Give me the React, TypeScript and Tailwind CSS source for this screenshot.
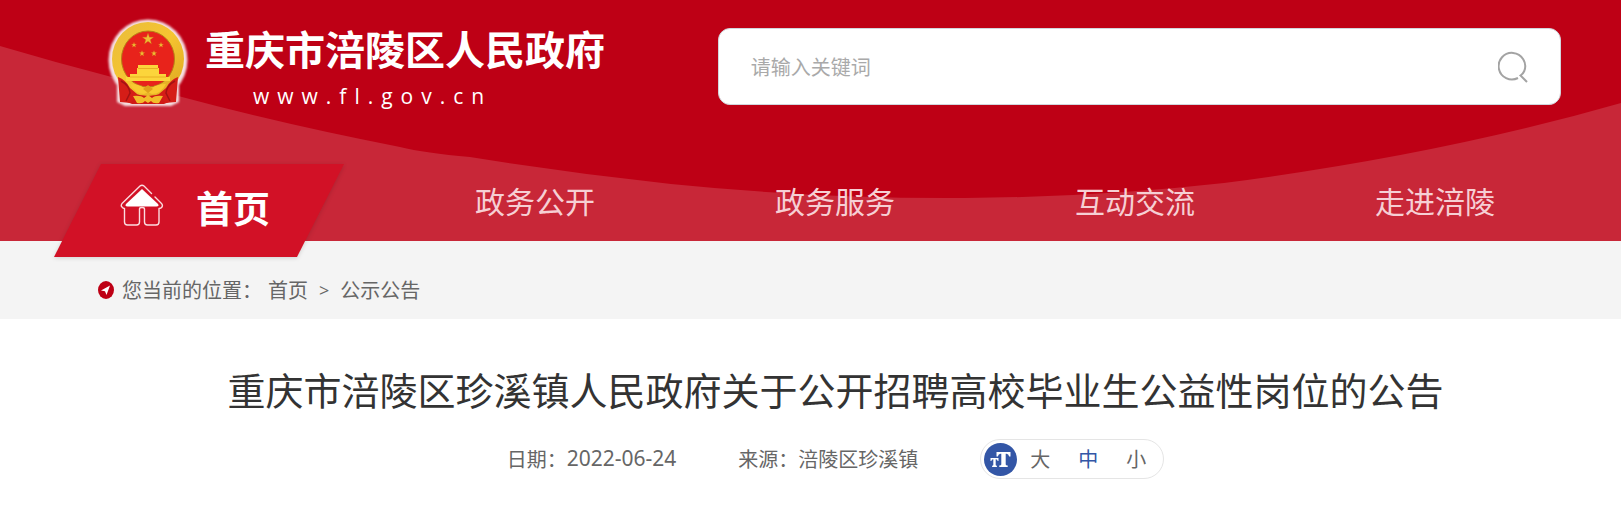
import React, { useState } from "react";

interface NavItem {
  label: string;
  href: string;
}

const navItems: NavItem[] = [
  { label: "政务公开", href: "#open" },
  { label: "政务服务", href: "#service" },
  { label: "互动交流", href: "#interact" },
  { label: "走进涪陵", href: "#about" },
];

const fontSizes = ["大", "中", "小"];

const STAR = "0,-10 2.4,-3.1 9.5,-3.1 3.8,1.2 5.9,8.1 0,3.9 -5.9,8.1 -3.8,1.2 -9.5,-3.1 -2.4,-3.1";

const Emblem: React.FC = () => (
  <svg viewBox="0 0 82 90" className="h-[90px] w-[82px] shrink-0 overflow-visible" aria-hidden="true">
    <defs>
      <filter id="glow" x="-20%" y="-20%" width="140%" height="140%">
        <feGaussianBlur stdDeviation="1.2" />
      </filter>
      <linearGradient id="gold" x1="0" y1="0" x2="1" y2="1">
        <stop offset="0" stopColor="#e8bc3c" />
        <stop offset="0.5" stopColor="#f6c531" />
        <stop offset="1" stopColor="#dba51f" />
      </linearGradient>
    </defs>
    {/* pale halo */}
    <g fill="#f6dfe1" filter="url(#glow)">
      <ellipse cx="41" cy="42" rx="39.5" ry="40.5" />
      <path d="M10 56h62v28l-8 4H18l-8-4z" />
    </g>
    {/* ribbons */}
    <path d="M14 58l-1 25 7 1 5 2h32l5-2 7-1-1-25z" fill="#d01a16" />
    <ellipse cx="41" cy="41" rx="36" ry="37" fill="url(#gold)" />
    <ellipse cx="41" cy="41" rx="26.5" ry="28" fill="#e8231b" stroke="#b78016" strokeWidth="1" />
    {/* ribbon over the lower ring */}
    <path d="M11 59q8 3 12 11l7 6-6 9-11-1zM71 59q-8 3-12 11l-7 6 6 9 11-1z" fill="#d51d17" />
    <path d="M14 63q8 4 9 12l-4 8M68 63q-8 4-9 12l4 8" fill="none" stroke="#a31213" strokeWidth="1.500" />
    <g fill="#eebd35" stroke="#c88d17" strokeWidth="0.5">
      <polygon points={STAR} transform="translate(41 21) scale(.58)" />
      <polygon points={STAR} transform="translate(27 27) scale(.28)" />
      <polygon points={STAR} transform="translate(54 27) scale(.28)" />
      <polygon points={STAR} transform="translate(35 35.500) scale(.3)" />
      <polygon points={STAR} transform="translate(47 35.500) scale(.3)" />
    </g>
    {/* gate */}
    <path d="M31 47h20v3h1v6h7v3h4v4H19v-4h4v-3h7v-6h1z" fill="#fcd53b" />
    <path d="M31 50.500h20M23 59h36" stroke="#e9ae22" strokeWidth="1" />
    {/* cog and knot */}
    <path d="M23 66q9 0 14 4l4-2 4 2q5-4 14-4-5 10-14 10l-4-2-4 2q-9 0-14-10z" fill="#f9c930" />
    <path d="M36 71l5-4 5 4-5 4z" fill="#e0a01c" />
    <path d="M26 78q8-1 11 2l4-3 4 3q3-3 11-2l-4 7q-6 1-8-2l-3 2-3-2q-2 3-8 2z" fill="#f2bd2b" />
  </svg>
);

const HomeIcon: React.FC = () => (
  <svg viewBox="0 0 44 42" className="h-[42px] w-11 shrink-0" fill="none" aria-hidden="true">
    <path d="M22 5L38 20q1.500 2.500-1.500 2.500h-29Q4.500 22.500 6 20z" fill="#fff" />
    <g stroke="#fbdcdf" strokeWidth="1.400" strokeLinecap="round" strokeLinejoin="round">
      <path d="M31.500 9.500L24 2q-2-1.700-4 0L2 19.500q-1.500 2.500 0 3.500 1 1.500 2.500 1.500V38q0 3 3 3h9q3 0 3-3V25q0-1.500 2.500-1.500t2.500 1.500v13q0 3 3 3H36q3 0 3-3V24.500q2 0 3-1.500 1-2-.5-3.500L35 13" />
    </g>
  </svg>
);

const SearchIcon: React.FC = () => (
  <svg viewBox="0 0 30 32" className="h-8 w-[30px]" fill="none" stroke="#a3a3a3" strokeWidth="2" aria-hidden="true">
    <path d="M20 27A13.300 13.300 0 1 1 26.300 20Q25 23 22.500 24.500L29 31" />
  </svg>
);

const Header: React.FC = () => (
  <header className="relative bg-[#be0015]">
    <svg
      viewBox="0 0 1621 241"
      preserveAspectRatio="none"
      className="absolute inset-0 h-full w-full"
      aria-hidden="true"
    >
      <path
        d="M0 46Q54 62 108 76Q245 117 400 147Q425 153 470 157Q570 173 671 184Q820 199 965 198Q1100 197 1224 183Q1440 155 1621 103V241H0z"
        fill="#c82738"
      />
    </svg>

    <div className="relative flex items-start justify-between pr-[60px] pl-[107px]">
      <a href="#home" className="flex items-start gap-4 pt-[18px] text-white">
        <Emblem />
        <span className="flex flex-col">
          <span className="text-[40px] leading-[60px] font-bold whitespace-nowrap">重庆市涪陵区人民政府</span>
          <span className="mt-1 pl-12 font-['Open_Sans','Noto_Sans',sans-serif] text-[21px] leading-7 tracking-[8px]">
            www.fl.gov.cn
          </span>
        </span>
      </a>

      <form
        onSubmit={(e) => e.preventDefault()}
        className="mt-7 flex h-[77px] w-[58%] items-center rounded-xl border border-gray-300 bg-white pr-8 pl-8"
      >
        <input
          type="text"
          aria-label="搜索"
          placeholder="请输入关键词"
          className="h-full flex-1 bg-transparent text-[20px] text-gray-700 outline-none placeholder:text-[#a9a9a9]"
        />
        <button type="submit" aria-label="搜索">
          <SearchIcon />
        </button>
      </form>
    </div>

    <nav className="relative mt-[50px] grid grid-cols-5 pr-9 pl-[85px]">
      <div className="relative h-[81px]">
        <a href="#home" className="absolute top-1 -left-8 flex h-[94px] w-[292px] text-white">
          <svg
            viewBox="0 0 292 94"
            className="absolute inset-0 h-full w-full overflow-visible drop-shadow-sm"
            aria-hidden="true"
          >
            <path d="M48 0H291L244 93H1z" fill="#d21126" />
          </svg>
          <span className="relative flex items-start gap-8 pt-5 pl-[67px]">
            <HomeIcon />
            <span className="text-[37px] leading-[46px] font-bold">首页</span>
          </span>
        </a>
      </div>
      {navItems.map((item) => (
        <a
          key={item.label}
          href={item.href}
          className="flex h-[81px] items-center justify-center text-[30px] text-[#f6cfd4]"
        >
          {item.label}
        </a>
      ))}
    </nav>
  </header>
);

const Breadcrumb: React.FC = () => (
  <nav className="flex h-[78px] items-center bg-[#f4f4f4] pt-5 pl-[98px] text-[20px] text-[#666]">
    <svg viewBox="0 0 16 18" className="mr-2 h-[18px] w-4" aria-hidden="true">
      <ellipse cx="8" cy="9" rx="8" ry="9" fill="#be0015" />
      <path d="M12 4.500L3 9.500l4 .7L8.500 14z" fill="#fff" />
    </svg>
    <span className="mr-1.5">您当前的位置：</span>
    <a href="#home">首页</a>
    <span className="mx-[11px] font-['Open_Sans',sans-serif] text-lg">&gt;</span>
    <a href="#notice">公示公告</a>
  </nav>
);

export default function App() {
  const [size, setSize] = useState("中");

  return (
    <div className="min-h-screen bg-white font-['Noto_Sans_CJK_SC',sans-serif]">
      <Header />
      <Breadcrumb />
      <main className="pt-[42px] pl-[50px]">
        <h1 className="text-center text-[38px] leading-[56px] text-[#333]">
          重庆市涪陵区珍溪镇人民政府关于公开招聘高校毕业生公益性岗位的公告
        </h1>
        <div className="mt-[22px] flex items-center justify-center gap-[62px] text-[20px] text-[#666]">
          <span className="flex items-center">
            日期：
            <time dateTime="2022-06-24" className="font-['Noto_Sans',sans-serif] text-[21px]">
              2022-06-24
            </time>
          </span>
          <span>来源：涪陵区珍溪镇</span>
          <div className="flex h-10 items-center rounded-full border border-[#e5e5e5] pr-[17px] pl-[3px]">
            <svg viewBox="0 0 33 33" className="mr-[13px] h-[33px] w-[33px]" aria-hidden="true">
              <circle cx="16.500" cy="16.500" r="16.500" fill="#3356a6" />
              <path
                d="M12.500 9h14v4.500h-1.300q-.7-2.700-2.700-2.700h-.8V21.500q0 1 2 1V24h-8.400v-1.500q2 0 2-1V10.800h-.8q-2 0-2.700 2.700h-1.300zM6.500 15h8v3h-.8q-.5-1.700-1.700-1.700h-.3V22q0 .8 1.200.8V24H8.100v-1.200q1.200 0 1.200-.8v-5.700H9q-1.200 0-1.700 1.700h-.8z"
                fill="#fff"
              />
            </svg>
            <div className="flex gap-7">
              {fontSizes.map((item) => (
                <button
                  key={item}
                  type="button"
                  onClick={() => setSize(item)}
                  className={size === item ? "text-[#3356a6]" : "text-[#666]"}
                >
                  {item}
                </button>
              ))}
            </div>
          </div>
        </div>
      </main>
    </div>
  );
}
